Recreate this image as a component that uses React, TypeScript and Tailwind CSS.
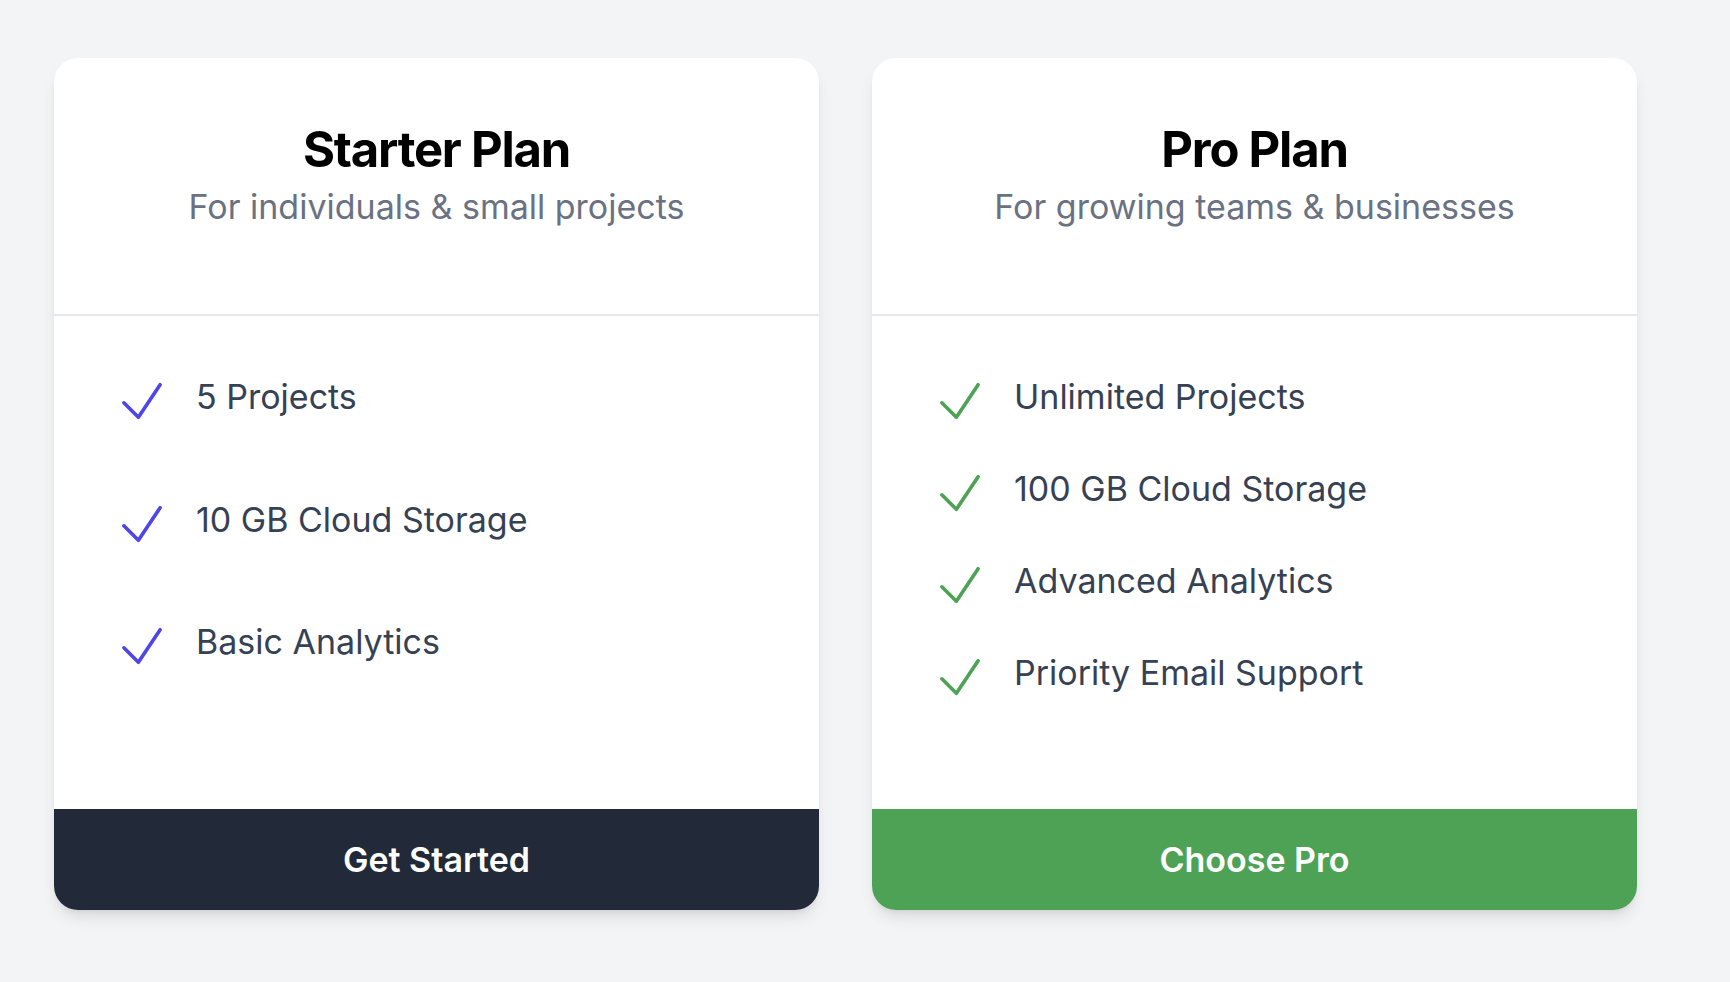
import React from "react";

function Check({ color }: { color: string }) {
  return (
    <svg
      viewBox="0 0 24 24"
      fill="none"
      stroke={color}
      strokeWidth={1.5}
      strokeLinecap="round"
      strokeLinejoin="round"
      className="w-[58px] h-[58px] shrink-0 translate-y-[4px]"
    >
      <path d="M4.5 12.75l6 6 9-13.5" />
    </svg>
  );
}

function Card({
  title,
  subtitle,
  features,
  checkColor,
  button,
  buttonClass,
}: {
  title: string;
  subtitle: string;
  features: string[];
  checkColor: string;
  button: string;
  buttonClass: string;
}) {
  return (
    <div className="w-[765px] h-[852px] bg-white rounded-3xl shadow-lg flex flex-col overflow-hidden">
      <div className="h-[258px] shrink-0 border-b-2 border-gray-200 flex flex-col items-center pt-[68px]">
        <h2 className="text-[49px] leading-[48px] font-bold text-black tracking-tight">{title}</h2>
        <p className="mt-[15px] text-[34px] leading-9 text-gray-500">{subtitle}</p>
      </div>
      <div className="flex-1 pt-[63px] pb-[62px] pl-[59px] pr-16 flex flex-col">
        {features.map((f) => (
          <div key={f} className="flex-1 flex items-start">
            <div className="flex items-center h-9">
              <Check color={checkColor} />
              <span className="ml-[25px] text-[34px] leading-9 text-gray-700 whitespace-nowrap">{f}</span>
            </div>
          </div>
        ))}
      </div>
      <button className={`h-[101px] shrink-0 w-full text-[34px] font-semibold text-white ${buttonClass}`}>
        {button}
      </button>
    </div>
  );
}

export default function App() {
  return (
    <div
      className="min-h-screen w-full bg-gray-100 pt-[58px] pl-[54px]"
      style={{ fontFamily: "Inter, 'Noto Sans', sans-serif" }}
    >
      <div className="flex gap-[53px]">
        <Card
          title="Starter Plan"
          subtitle="For individuals & small projects"
          features={["5 Projects", "10 GB Cloud Storage", "Basic Analytics"]}
          checkColor="#4f46e5"
          button="Get Started"
          buttonClass="bg-[#222938]"
        />
        <Card
          title="Pro Plan"
          subtitle="For growing teams & businesses"
          features={[
            "Unlimited Projects",
            "100 GB Cloud Storage",
            "Advanced Analytics",
            "Priority Email Support",
          ]}
          checkColor="#4ea256"
          button="Choose Pro"
          buttonClass="bg-[#4ea256]"
        />
      </div>
    </div>
  );
}
